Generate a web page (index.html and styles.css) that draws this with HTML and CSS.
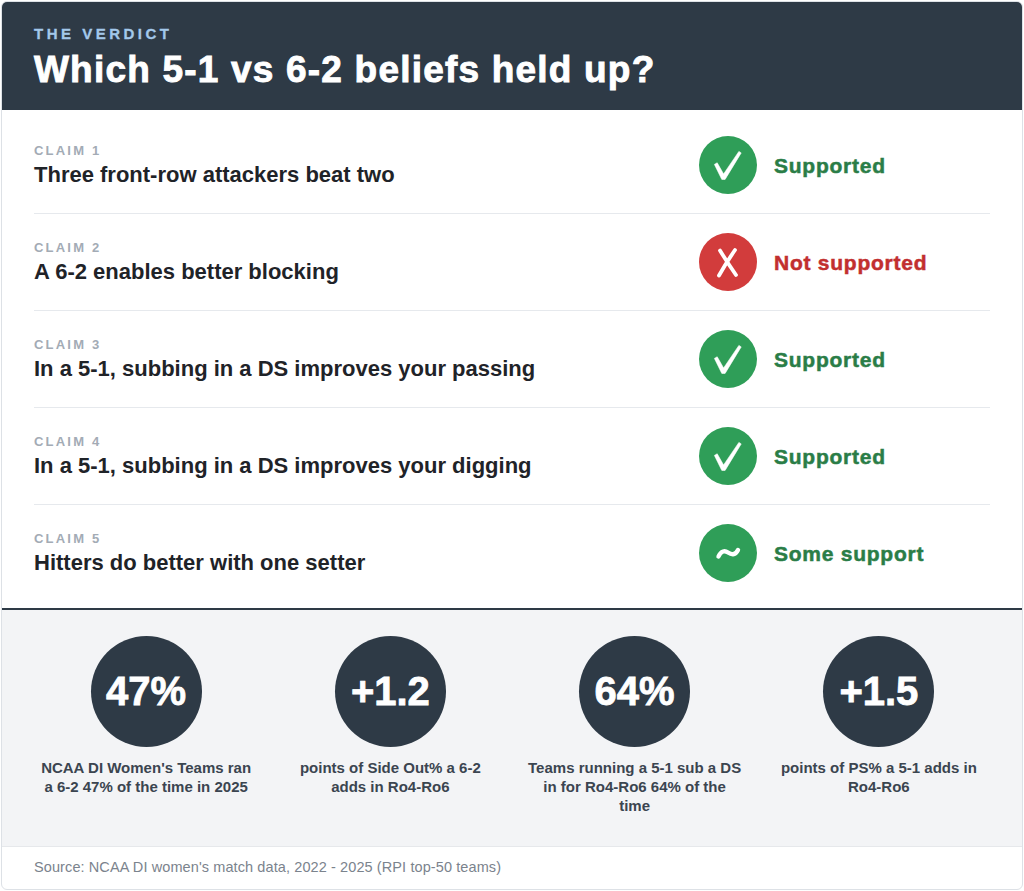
FILE: index.html
```html
<!DOCTYPE html>
<html lang="en">
<head>
<meta charset="utf-8">
<title>The Verdict</title>
<link rel="stylesheet" href="styles.css">
</head>
<body>
<div class="card">
  <header class="hero">
    <div class="eyebrow">THE VERDICT</div>
    <h1 class="title">Which 5-1 vs 6-2 beliefs held up?</h1>
  </header>

  <section class="claims">
    <div class="claim">
      <div class="claim-text">
        <div class="claim-label">CLAIM 1</div>
        <div class="claim-title">Three front-row attackers beat two</div>
      </div>
      <div class="verdict">
        <div class="badge badge-green">
          <svg viewBox="0 0 58 58" width="58" height="58"><path d="M15.4 28.4 L18.2 26.8 L24.6 38 L39.9 15.4 L42.2 16.9 L26.1 43.4 L22.8 43.4 Z" fill="#fff" stroke="#fff" stroke-width="0.6" stroke-linejoin="round"/></svg>
        </div>
        <div class="verdict-text green">Supported</div>
      </div>
    </div>

    <div class="claim">
      <div class="claim-text">
        <div class="claim-label">CLAIM 2</div>
        <div class="claim-title">A 6-2 enables better blocking</div>
      </div>
      <div class="verdict">
        <div class="badge badge-red">
          <svg viewBox="0 0 58 58" width="58" height="58"><path d="M21 17.5 Q28 29 37 42 M36 17 Q27 30 20 42.5" fill="none" stroke="#fff" stroke-width="3.8" stroke-linecap="round"/></svg>
        </div>
        <div class="verdict-text red">Not supported</div>
      </div>
    </div>

    <div class="claim">
      <div class="claim-text">
        <div class="claim-label">CLAIM 3</div>
        <div class="claim-title">In a 5-1, subbing in a DS improves your passing</div>
      </div>
      <div class="verdict">
        <div class="badge badge-green">
          <svg viewBox="0 0 58 58" width="58" height="58"><path d="M15.4 28.4 L18.2 26.8 L24.6 38 L39.9 15.4 L42.2 16.9 L26.1 43.4 L22.8 43.4 Z" fill="#fff" stroke="#fff" stroke-width="0.6" stroke-linejoin="round"/></svg>
        </div>
        <div class="verdict-text green">Supported</div>
      </div>
    </div>

    <div class="claim">
      <div class="claim-text">
        <div class="claim-label">CLAIM 4</div>
        <div class="claim-title">In a 5-1, subbing in a DS improves your digging</div>
      </div>
      <div class="verdict">
        <div class="badge badge-green">
          <svg viewBox="0 0 58 58" width="58" height="58"><path d="M15.4 28.4 L18.2 26.8 L24.6 38 L39.9 15.4 L42.2 16.9 L26.1 43.4 L22.8 43.4 Z" fill="#fff" stroke="#fff" stroke-width="0.6" stroke-linejoin="round"/></svg>
        </div>
        <div class="verdict-text green">Supported</div>
      </div>
    </div>

    <div class="claim">
      <div class="claim-text">
        <div class="claim-label">CLAIM 5</div>
        <div class="claim-title">Hitters do better with one setter</div>
      </div>
      <div class="verdict">
        <div class="badge badge-green">
          <svg viewBox="0 0 58 58" width="58" height="58"><path d="M19.5 32.5 C22 26.5 26 26.5 29 28.5 C32 30.5 36 32 39 26" fill="none" stroke="#fff" stroke-width="4.4" stroke-linecap="round"/></svg>
        </div>
        <div class="verdict-text green">Some support</div>
      </div>
    </div>
  </section>

  <section class="stats">
    <div class="stat">
      <div class="stat-circle">47%</div>
      <p class="stat-desc">NCAA DI Women's Teams ran a 6-2 47% of the time in 2025</p>
    </div>
    <div class="stat">
      <div class="stat-circle">+1.2</div>
      <p class="stat-desc">points of Side Out% a 6-2 adds in Ro4-Ro6</p>
    </div>
    <div class="stat">
      <div class="stat-circle">64%</div>
      <p class="stat-desc">Teams running a 5-1 sub a DS in for Ro4-Ro6 64% of the time</p>
    </div>
    <div class="stat">
      <div class="stat-circle">+1.5</div>
      <p class="stat-desc">points of PS% a 5-1 adds in Ro4-Ro6</p>
    </div>
  </section>

  <footer class="source">Source: NCAA DI women's match data, 2022 - 2025 (RPI top-50 teams)</footer>
</div>
</body>
</html>
```

FILE: styles.css
```css
* { box-sizing: border-box; }

html, body {
  margin: 0;
  padding: 0;
  background: #ffffff;
}

body {
  font-family: "Liberation Sans", Arial, sans-serif;
  color: #1f2328;
}

.card {
  margin: 1px;
  border: 1px solid #dde1e6;
  border-radius: 6px;
  overflow: hidden;
  background: #ffffff;
}

/* Header */
.hero {
  background: #2e3a46;
  padding: 23px 32px 18px;
}

.eyebrow {
  font-size: 15px;
  line-height: 18px;
  font-weight: 700;
  letter-spacing: 3.5px;
  color: #a3c8ea;
  -webkit-text-stroke: 0.3px #a3c8ea;
}

.title {
  margin: 4px 0 0;
  font-size: 37px;
  line-height: 45px;
  font-weight: 700;
  letter-spacing: 1.2px;
  color: #ffffff;
  -webkit-text-stroke: 0.9px #ffffff;
}

/* Claims */
.claims {
  padding: 7px 32px 7px;
  border-bottom: 2px solid #2e3a46;
}

.claim {
  display: flex;
  align-items: center;
  padding: 19px 0;
  border-bottom: 1px solid #e6e9ed;
}

.claim:last-child {
  border-bottom: none;
}

.claim-text {
  flex: 1 1 auto;
  display: flex;
  flex-direction: column;
  gap: 4px;
}

.claim-label {
  font-size: 13px;
  line-height: 16px;
  font-weight: 700;
  letter-spacing: 2.2px;
  color: #a3abb5;
}

.claim-title {
  font-size: 22px;
  line-height: 24px;
  font-weight: 700;
  color: #1f2328;
}

.verdict {
  flex: 0 0 291px;
  display: flex;
  align-items: center;
  gap: 17px;
}

.badge {
  width: 58px;
  height: 58px;
  border-radius: 50%;
  flex: 0 0 58px;
}

.badge svg { display: block; }

.badge-green { background: #2f9e58; }
.badge-red { background: #d23c3c; }

.verdict-text {
  font-size: 21px;
  line-height: 24px;
  font-weight: 700;
  letter-spacing: 0.75px;
  padding-top: 2px;
}

.green { color: #2a7d47; -webkit-text-stroke: 0.5px #2a7d47; }
.red { color: #c22f2f; -webkit-text-stroke: 0.5px #c22f2f; }

/* Stats */
.stats {
  background: #f3f4f6;
  padding: 26px 21px 31px 22px;
  display: grid;
  grid-template-columns: repeat(4, 1fr);
  border-bottom: 1px solid #e6e8eb;
}

.stat {
  display: flex;
  flex-direction: column;
  align-items: center;
  padding: 0 14px;
}

.stat-circle {
  width: 111px;
  height: 111px;
  border-radius: 50%;
  background: #2e3a46;
  color: #ffffff;
  font-size: 40px;
  font-weight: 700;
  -webkit-text-stroke: 0.8px #ffffff;
  display: flex;
  align-items: center;
  justify-content: center;
}

.stat-desc {
  margin: 11px 0 0;
  font-size: 15px;
  line-height: 19px;
  font-weight: 700;
  text-align: center;
  color: #3b4550;
}

/* Footer */
.source {
  padding: 11px 32px 13px;
  font-size: 14.5px;
  line-height: 18px;
  letter-spacing: 0.1px;
  color: #7b838d;
}
```
